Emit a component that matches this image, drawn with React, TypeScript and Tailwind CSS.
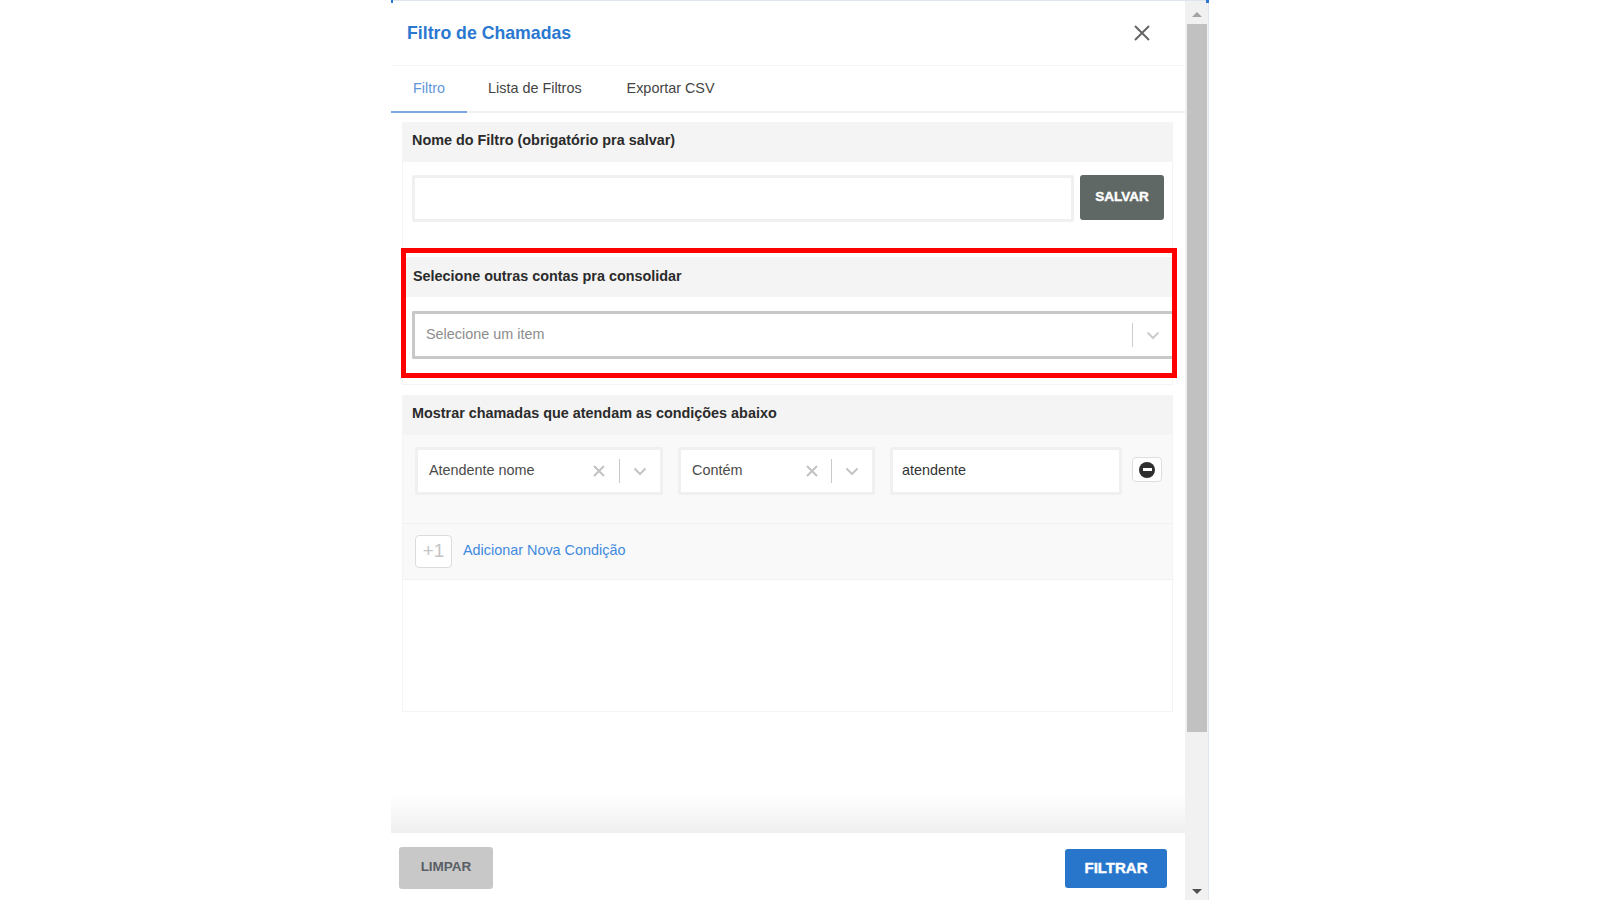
import React from "react";

const font = { fontFamily: '"Liberation Sans", Arial, sans-serif' };

function Chevron({ color = "#c4c4c4" }: { color?: string }) {
  return (
    <svg width="14" height="9" viewBox="0 0 14 9" fill="none" className="shrink-0">
      <path d="M1.5 1.5 L7 7 L12.5 1.5" stroke={color} strokeWidth="2" />
    </svg>
  );
}

function Cross() {
  return (
    <svg width="12" height="12" viewBox="0 0 12 12" fill="none" className="shrink-0">
      <path d="M1 1 L11 11 M11 1 L1 11" stroke="#c2c2c2" strokeWidth="2" />
    </svg>
  );
}

function Select({ label, width, textW, dividerMl }: { label: string; width: string; textW: string; dividerMl: string }) {
  return (
    <div className={`flex ${width} h-[48px] items-center rounded-[2px] border-[3px] border-[#f0f0f0] bg-white`}>
      <span className={`${textW} pb-[1px] pl-[11px] text-[14.4px] text-[#4a4a4a]`}>{label}</span>
      <Cross />
      <span className={`${dividerMl} h-[24px] w-px bg-[#c9c9c9]`} />
      <span className="ml-[13px]">
        <Chevron />
      </span>
    </div>
  );
}

export default function App() {
  return (
    <div className="h-[900px] w-[1600px] overflow-hidden bg-white text-[#333]" style={font}>
      <div className="relative ml-[391px] flex h-[900px] w-[818px] border-t border-r border-[#dfe6ee]">
        <span className="absolute -top-px left-0 h-[3px] w-[2px] bg-[#2a78d0]" />
        <span className="absolute -top-px -right-px h-[3px] w-[3px] bg-[#2a78d0]" />
        <div className="flex h-full w-[794px] flex-col">
          <header className="flex h-[65px] shrink-0 items-center justify-between border-b border-[#f4f4f4] pl-[16px] pr-[34px] pt-[1px]">
            <h1 className="text-[17.7px] font-bold text-[#2a78d0]">Filtro de Chamadas</h1>
            <svg width="18" height="18" viewBox="0 0 18 18" fill="none" className="-mt-[2px]">
              <path d="M2 2 L16 16 M16 2 L2 16" stroke="#666" strokeWidth="2" />
            </svg>
          </header>

          <nav className="flex h-[47px] shrink-0 border-b-2 border-[#f0f0f0] text-[14.4px] text-[#444]">
            <div className="-mb-[2px] flex w-[76px] items-center justify-center border-b-2 border-[#7ba9dd] text-[#5f96d8]">Filtro</div>
            <div className="ml-[21px] flex items-center">Lista de Filtros</div>
            <div className="ml-[45px] flex items-center">Exportar CSV</div>
          </nav>

          <main className="flex min-h-0 flex-1 flex-col px-[11px] pt-[9px]">
            <section className="relative h-[263px] w-[771px] shrink-0 border-b border-l border-r border-[#f4f4f4]">
              <h2 className="flex h-[40px] items-center rounded-t-[2px] bg-[#f4f4f4] pb-[3px] pl-[9px] text-[14.4px] font-bold text-[#2b2b2b]">
                Nome do Filtro (obrigatório pra salvar)
              </h2>
              <div className="mt-[13px] flex h-[47px] items-start pl-[9px]">
                <div className="h-[47px] w-[662px] rounded-[2px] border-[3px] border-[#f0f0f0] bg-white" />
                <button className="ml-[6px] flex h-[45px] w-[84px] items-center justify-center rounded-[3px] bg-[#5f6864] pb-[1px] text-[13.5px] font-bold text-white [-webkit-text-stroke:0.4px_white]">
                  SALVAR
                </button>
              </div>
              <h2 className="mt-[35px] flex h-[40px] items-center bg-[#f4f4f4] pl-[10px] text-[14.4px] font-bold text-[#2b2b2b]">
                Selecione outras contas pra consolidar
              </h2>
              <div className="ml-[9px] mt-[14px] flex h-[48px] w-[760px] items-center rounded-l-[2px] border-y-[3px] border-l-[3px] border-[#c8c8c8] bg-white">
                <span className="w-[717px] pb-[1px] pl-[11px] text-[14.4px] text-[#8c8c8c]">Selecione um item</span>
                <span className="h-[24px] w-px bg-[#cdcdcd]" />
                <span className="ml-[13px]">
                  <Chevron color="#cccccc" />
                </span>
              </div>
              <div className="pointer-events-none absolute left-[-2px] top-[126px] h-[130px] w-[776px] border-[5px] border-[#ff0000]" />
            </section>

            <section className="mt-[10px] flex h-[317px] w-[771px] shrink-0 flex-col border-b border-l border-r border-[#f4f4f4]">
              <h2 className="flex h-[40px] shrink-0 items-center rounded-t-[2px] bg-[#f4f4f4] pb-[3px] pl-[9px] text-[14.4px] font-bold text-[#2b2b2b]">
                Mostrar chamadas que atendam as condições abaixo
              </h2>
              <div className="h-[89px] shrink-0 border-b border-[#f1f1f1] bg-[#f9f9f9] pl-[12px] pt-[12px]">
                <div className="flex items-start">
                  <Select label="Atendente nome" width="w-[248px]" textW="w-[175px]" dividerMl="ml-[14px]" />
                  <div className="ml-[15px]">
                    <Select label="Contém" width="w-[197px]" textW="w-[125px]" dividerMl="ml-[13px]" />
                  </div>
                  <div className="ml-[15px] flex h-[48px] w-[232px] items-center rounded-[2px] border-[3px] border-[#f0f0f0] bg-white pb-[1px] pl-[9px] text-[14.4px] text-[#333]">
                    atendente
                  </div>
                  <button className="ml-[10px] mt-[10px] flex h-[25px] w-[30px] items-center justify-center rounded-[4px] border border-[#dedede] bg-white">
                    <span className="flex h-[16px] w-[16px] items-center justify-center rounded-full bg-[#2f2f2f]">
                      <span className="h-[3px] w-[9px] bg-white" />
                    </span>
                  </button>
                </div>
              </div>
              <div className="flex h-[56px] shrink-0 items-center border-b border-[#f1f1f1] bg-[#f9f9f9] pb-[1px] pl-[12px]">
                <div className="flex h-[33px] w-[37px] items-center justify-center rounded-[4px] border border-[#dcdcdc] bg-white text-[19px] text-[#c4c4c4]">
                  +1
                </div>
                <span className="ml-[11px] text-[14.4px] text-[#3f8ade]">Adicionar Nova Condição</span>
              </div>
            </section>
          </main>

          <div className="h-[38px] shrink-0 bg-gradient-to-b from-white to-[#efefef]" />
          <footer className="flex h-[67px] w-[785px] shrink-0 items-start justify-between bg-white pl-[8px] pr-[9px] pt-[14px]">
            <button className="h-[42px] w-[94px] rounded-[3px] bg-[#c8c8c8] pb-[2px] text-[13.5px] font-bold text-[#5a5f66]">LIMPAR</button>
            <button className="mt-[2px] h-[39px] w-[102px] rounded-[3px] bg-[#2776cc] text-[15px] font-bold text-white [-webkit-text-stroke:0.4px_white]">
              FILTRAR
            </button>
          </footer>
        </div>

        <div className="flex h-full w-[23px] flex-col bg-[#f1f1f1]">
          <div className="flex h-[23px] shrink-0 items-center justify-center">
            <span className="mt-[3px] h-0 w-0 border-x-[5px] border-b-[5px] border-x-transparent border-b-[#a3a3a3]" />
          </div>
          <div className="ml-[2px] h-[708px] w-[20px] shrink-0 bg-[#c1c1c1]" />
          <div className="flex flex-1 items-end justify-center pb-[6px]">
            <span className="h-0 w-0 border-x-[5px] border-t-[5px] border-x-transparent border-t-[#505050]" />
          </div>
        </div>
      </div>
    </div>
  );
}
